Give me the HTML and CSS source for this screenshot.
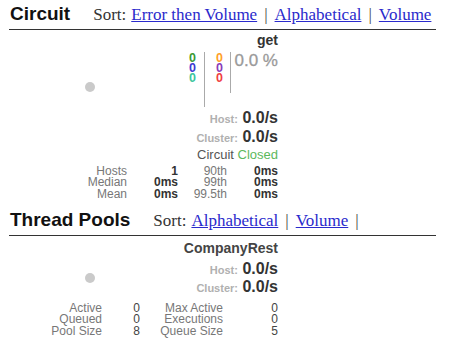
FILE: index.html
```html
<!DOCTYPE html>
<html lang="en">
<head>
    <meta charset="UTF-8">
    <meta name="viewport" content="width=device-width, initial-scale=1.0">
    <title>Hystrix Stream</title>
    <link rel="stylesheet" href="styles.css">
</head>
<body>
    <div class="dashboard">
        <div class="section-head">
            <h2>Circuit</h2>
            <div class="sort"><span class="sort-label">Sort:</span><a href="#">Error then Volume</a><span class="sep">|</span><a href="#">Alphabetical</a><span class="sep">|</span><a href="#">Volume</a></div>
        </div>

        <div class="monitor circuit">
            <div class="monitor-name">get</div>
            <div class="monitor-body">
                <div class="chart"><span class="dot"></span></div>
                <div class="readout">
                    <div class="counters">
                        <div class="counter-col">
                            <span class="success">0</span>
                            <span class="short-circuited">0</span>
                            <span class="bad-request">0</span>
                        </div>
                        <span class="rule rule-long"></span>
                        <div class="counter-col col-two">
                            <span class="timeout">0</span>
                            <span class="rejected">0</span>
                            <span class="failure">0</span>
                        </div>
                        <span class="rule rule-short"></span>
                        <div class="error-rate">0.0 %</div>
                    </div>
                    <div class="rate"><span class="rate-label">Host:</span> <span class="rate-value">0.0/s</span></div>
                    <div class="rate"><span class="rate-label">Cluster:</span> <span class="rate-value">0.0/s</span></div>
                    <div class="circuit-status">Circuit <span class="closed">Closed</span></div>
                </div>
            </div>
            <div class="stats latency">
                <span class="k">Hosts</span><span class="v">1</span><span class="k">90th</span><span class="v">0ms</span>
                <span class="k">Median</span><span class="v">0ms</span><span class="k">99th</span><span class="v">0ms</span>
                <span class="k">Mean</span><span class="v">0ms</span><span class="k">99.5th</span><span class="v">0ms</span>
            </div>
        </div>

        <div class="section-head">
            <h2>Thread Pools</h2>
            <div class="sort"><span class="sort-label">Sort:</span><a href="#">Alphabetical</a><span class="sep">|</span><a href="#">Volume</a><span class="sep">|</span></div>
        </div>

        <div class="monitor pool">
            <div class="monitor-name">CompanyRest</div>
            <div class="monitor-body">
                <div class="chart centered"><span class="dot"></span></div>
                <div class="readout">
                    <div class="rate"><span class="rate-label">Host:</span> <span class="rate-value">0.0/s</span></div>
                    <div class="rate"><span class="rate-label">Cluster:</span> <span class="rate-value">0.0/s</span></div>
                </div>
            </div>
            <div class="stats pool-stats">
                <span class="k">Active</span><span class="v">0</span><span class="k">Max Active</span><span class="v">0</span>
                <span class="k">Queued</span><span class="v">0</span><span class="k">Executions</span><span class="v">0</span>
                <span class="k">Pool Size</span><span class="v">8</span><span class="k">Queue Size</span><span class="v">5</span>
            </div>
        </div>
    </div>
</body>
</html>
```

FILE: styles.css
```css
* {
    margin: 0;
    padding: 0;
    box-sizing: border-box;
}

body {
    font-family: "Liberation Sans", Arial, sans-serif;
    background: white;
    color: #333;
}

.dashboard {
    width: 427px;
    margin-left: 9px;
}

.section-head {
    display: flex;
    align-items: baseline;
    padding: 3px 0 4px;
    border-bottom: 1px solid #333;
}

.section-head h2 {
    font-size: 19px;
    line-height: 22px;
    font-weight: bold;
    color: #111;
    margin: 0 23px 0 1px;
}

.sort {
    font-family: "Liberation Serif", "Times New Roman", serif;
    font-size: 17px;
    line-height: 20px;
    color: #333;
}

.sort-label {
    margin-right: 5px;
}

.sort a {
    color: #2a2acc;
}

.sep {
    margin: 0 7px;
    color: #444;
}

.monitor {
    width: 230px;
    margin-left: 39px;
    padding: 2px 0 6px;
}

.monitor.pool {
    padding-top: 4px;
}

.monitor-name {
    text-align: right;
    font-size: 14px;
    line-height: 16px;
    font-weight: bold;
    color: #333;
}

.pool .monitor-name {
    color: #444;
}

.monitor-body {
    display: flex;
    margin-top: 4px;
}

.chart {
    flex: 1;
    padding: 30px 0 0 37px;
}

.chart.centered {
    display: flex;
    align-items: center;
    padding-top: 0;
}

.dot {
    display: block;
    width: 10px;
    height: 10px;
    border-radius: 50%;
    background: #cacaca;
}

.readout {
    text-align: right;
}

.counters {
    display: flex;
    justify-content: flex-end;
    align-items: flex-start;
    margin-bottom: 1px;
}

.counter-col {
    display: flex;
    flex-direction: column;
    width: 8px;
    font-size: 12.5px;
    line-height: 10px;
    font-weight: bold;
    text-align: center;
    margin: 1px 7px 0 0;
}

.counter-col.col-two {
    margin: 1px 6px 0 11px;
}

.rule {
    width: 1px;
    background: #aaa;
}

.rule-long {
    height: 55px;
}

.rule-short {
    height: 41px;
}

.error-rate {
    font-size: 17px;
    line-height: 16px;
    color: #9a9a9a;
    -webkit-text-stroke: 0.3px #9a9a9a;
    margin: 1px 0 0 4px;
}

.success { color: #3a9a32; }
.short-circuited { color: #3b3bd0; }
.bad-request { color: #3cc69c; }
.timeout { color: #ffa028; }
.rejected { color: #8a3cb8; }
.failure { color: #f04040; }

.rate {
    line-height: 19px;
    white-space: nowrap;
}

.pool .rate {
    line-height: 18px;
}

.rate-label {
    font-size: 11px;
    line-height: 1;
    font-weight: bold;
    color: #b0b0b0;
}

.rate-value {
    font-size: 16px;
    font-weight: bold;
    color: #333;
}

.circuit-status {
    font-size: 13px;
    line-height: 17px;
    color: #555;
}

.closed {
    color: #5cb85c;
}

.stats {
    display: grid;
    font-size: 12px;
    text-align: right;
    white-space: nowrap;
}

.latency {
    grid-template-columns: 79px 51px 49px 51px;
    line-height: 11.3px;
    margin-top: 3px;
}

.pool-stats {
    grid-template-columns: 54px 38px 83px 55px;
    line-height: 11.5px;
    margin-top: 7px;
}

.k {
    color: #777;
}

.latency .v {
    font-weight: bold;
    color: #333;
}

.pool-stats .v {
    color: #444;
}
```
